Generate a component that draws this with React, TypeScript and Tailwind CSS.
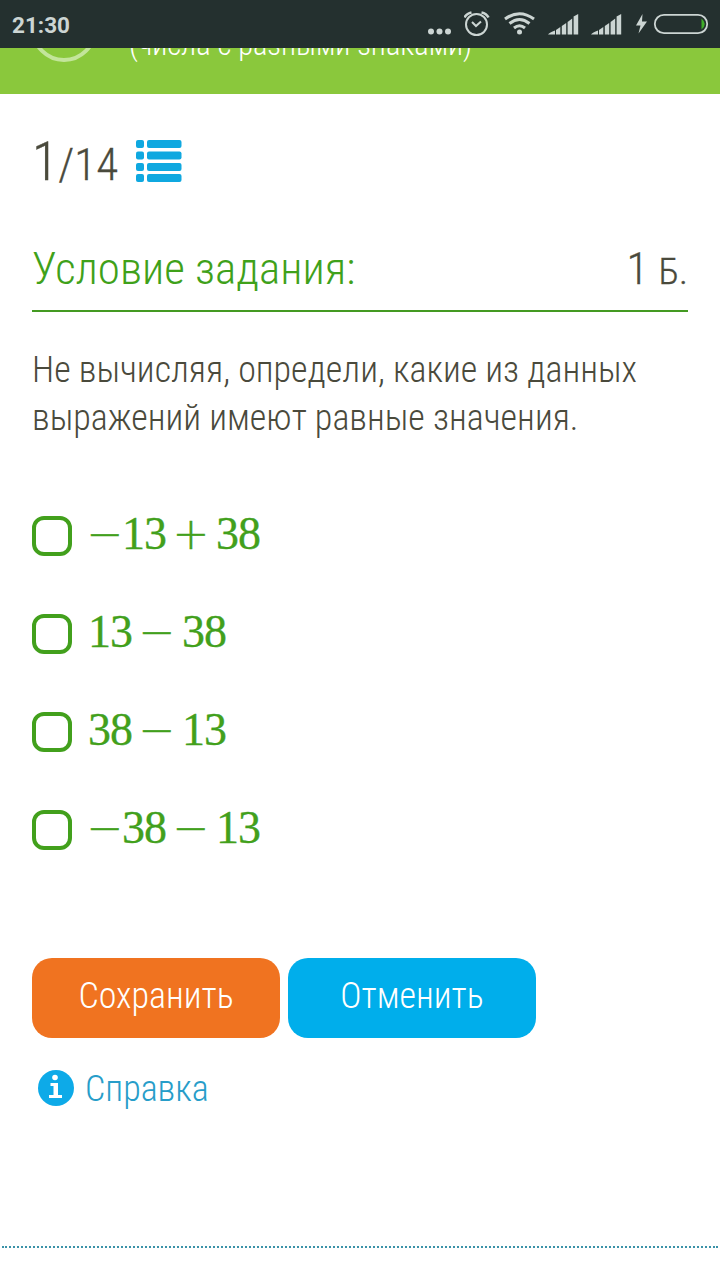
import React, { useState } from 'react';

const answers = [
  { id: 'a', parts: ['−', '13', '+', '38'] },
  { id: 'b', parts: ['13', '−', '38'] },
  { id: 'c', parts: ['38', '−', '13'] },
  { id: 'd', parts: ['−', '38', '−', '13'] },
];

const SignalIcon = () => (
  <svg width="31" height="21" viewBox="0 0 31 21" fill="#ccd5d3">
    <path d="M0 20.5 Q1.5 18.5 7 16.5 V20.5 Z" />
    <path d="M8 16 L12.3 13 V20.5 H8 Z" />
    <path d="M13.8 12 L18.2 9 V20.5 H13.8 Z" />
    <path d="M19.6 8 L24.2 4.5 V20.5 H19.6 Z" />
    <path d="M25.6 2.5 L30.2 0 V20.5 H25.6 Z" />
  </svg>
);

const StatusBar = () => (
  <div className="flex h-12 shrink-0 items-center bg-[#24302f] pl-3 text-[#ccd5d3]">
    <span className="pt-0.5 font-[Roboto] text-[22.5px] leading-none font-bold [font-stretch:normal]">21:30</span>
    <svg className="ml-auto" width="24" height="48" viewBox="0 0 24 48" fill="#ccd5d3">
      <circle cx="3" cy="31.5" r="3" />
      <circle cx="11.5" cy="31.5" r="3" />
      <circle cx="20" cy="31.5" r="3" />
    </svg>
    <svg className="ml-3" width="28" height="48" viewBox="0 0 28 48" fill="none" stroke="#ccd5d3" strokeWidth="2">
      <circle cx="12.5" cy="24.5" r="10.5" />
      <path d="M8 22 L12 26 L17 21.5" />
      <path d="M0.5 17.5 Q2.5 13.5 7.5 12.5 M17.5 12.5 Q22.5 13.5 24.5 17.5" strokeWidth="2.6" />
    </svg>
    <svg className="ml-3" width="32" height="48" viewBox="0 0 32 48" fill="none" stroke="#ccd5d3" strokeWidth="3">
      <path d="M1 19 Q15.5 8.5 30 19" />
      <path d="M5.5 23.5 Q15.5 15.5 25.5 23.5" />
      <path d="M10 28 Q15.5 23.5 21 28" />
      <circle cx="15.5" cy="32" r="2.5" fill="#ccd5d3" stroke="none" />
    </svg>
    <div className="ml-3 flex gap-3">
      <SignalIcon />
      <SignalIcon />
    </div>
    <svg className="ml-[13px]" width="85" height="48" viewBox="0 0 85 48">
      <path d="M7.5 14 L1 25.5 H5.5 L3.5 33.5 L12 21.5 H7 Z" fill="#ccd5d3" />
      <rect x="19.8" y="14.8" width="52.4" height="18.4" rx="9.2" fill="none" stroke="#ccd5d3" strokeWidth="1.8" />
      <path d="M66.5 18.5 Q73 24 66.5 29.5 Z" fill="#3fae29" />
    </svg>
  </div>
);

// Signs get a fixed-width slot; a binary sign also has space on both sides
const Expression = ({ parts }: { parts: string[] }) => (
  <span className="-mt-1 flex items-baseline leading-none font-normal text-[#42a01c]">
    {parts.map((part, i) =>
      part === '−' || part === '+' ? (
        <span
          key={i}
          className={`flex w-[34px] justify-center font-['DejaVu_Sans_Light','DejaVu_Sans',sans-serif] text-[44px] font-extralight [-webkit-text-stroke:0.4px_#42a01c] ${i > 0 ? 'mx-2' : ''}`}
        >
          {part}
        </span>
      ) : (
        <span
          key={i}
          className="font-['Liberation_Serif',serif] text-[46px] tracking-[-1px] [-webkit-text-stroke:0.3px_#42a01c]"
        >
          {part}
        </span>
      )
    )}
  </span>
);

export default function App() {
  const [checked, setChecked] = useState<string[]>([]);

  const toggle = (id: string) => {
    setChecked(checked.includes(id) ? checked.filter((c) => c !== id) : [...checked, id]);
  };

  return (
    <div className="flex h-[1280px] w-[720px] flex-col overflow-hidden bg-white font-['Roboto_Condensed',Roboto,sans-serif] font-light text-[#4a4a3c] [font-stretch:condensed]">
      <StatusBar />

      <header className="flex h-[46px] shrink-0 overflow-hidden bg-[#8ac83c] text-white">
        <div className="-mt-[52px] ml-[31px] size-[66px] shrink-0 rounded-full border-4 border-[#c3e59b]" />
        <span className="-mt-[21px] ml-8 text-[30.5px] leading-9 whitespace-nowrap">(числа с разными знаками)</span>
      </header>

      <main className="flex flex-col px-8">
        <div className="mt-8 flex items-baseline [-webkit-text-stroke:0.3px_#4a4a3c]">
          <span className="text-[54px] leading-[72px]">1</span>
          <span className="text-[45px]">/14</span>
          <svg className="relative top-0.5 ml-[18px]" width="46" height="42" viewBox="0 0 46 42" fill="#0fa8e0">
            {[0, 11.5, 23, 34].map((y) => (
              <g key={y}>
                <rect x="0" y={y} width="8" height="8" rx="2" />
                <rect x="11" y={y} width="34.5" height="8" rx="2" />
              </g>
            ))}
          </svg>
        </div>

        <div className="mt-9 flex items-baseline justify-between border-b-2 border-[#449a22] pb-2 text-[45px]">
          <h1 className="text-[#3fa11a]">Условие задания:</h1>
          <div className="[-webkit-text-stroke:0.3px_#4a4a3c]">1 <span className="text-[37.5px]">Б.</span></div>
        </div>

        <p className="mt-[34px] text-[36px] leading-12 whitespace-nowrap">
          Не вычисляя, определи, какие из данных
          <br />
          выражений имеют равные значения.
        </p>

        <ul className="mt-[74px] flex flex-col gap-[58px]">
          {answers.map((a) => (
            <li key={a.id} className="flex h-10 cursor-pointer items-center gap-4" onClick={() => toggle(a.id)}>
              <span className={`size-10 rounded-xl border-4 border-[#42a01c] ${checked.includes(a.id) ? 'bg-[#42a01c]' : ''}`} />
              <Expression parts={a.parts} />
            </li>
          ))}
        </ul>

        <div className="mt-[108px] flex gap-2 text-[36px] text-white">
          <button className="h-20 w-[248px] rounded-[20px] bg-[#f07320] pb-1">Сохранить</button>
          <button className="h-20 w-[248px] rounded-[20px] bg-[#00aeeb] pb-1">Отменить</button>
        </div>

        <a className="mt-6 flex items-center pl-1.5 text-[36px] text-[#279dc9]">
          <svg className="relative -top-px mr-[11px]" width="36" height="36" viewBox="0 0 36 36">
            <circle cx="18" cy="18" r="18" fill="#0daae8" />
            <circle cx="17" cy="7.5" r="2.8" fill="#fff" />
            <path d="M12.5 13 H20 V25 H24 V28 H11 V25 H15.5 V16 H12.5 Z" fill="#fff" />
          </svg>
          Справка
        </a>
      </main>

      <footer className="mx-0.5 mt-auto h-[34px] border-t-2 border-dotted border-[#3a92a8]" />
    </div>
  );
}
